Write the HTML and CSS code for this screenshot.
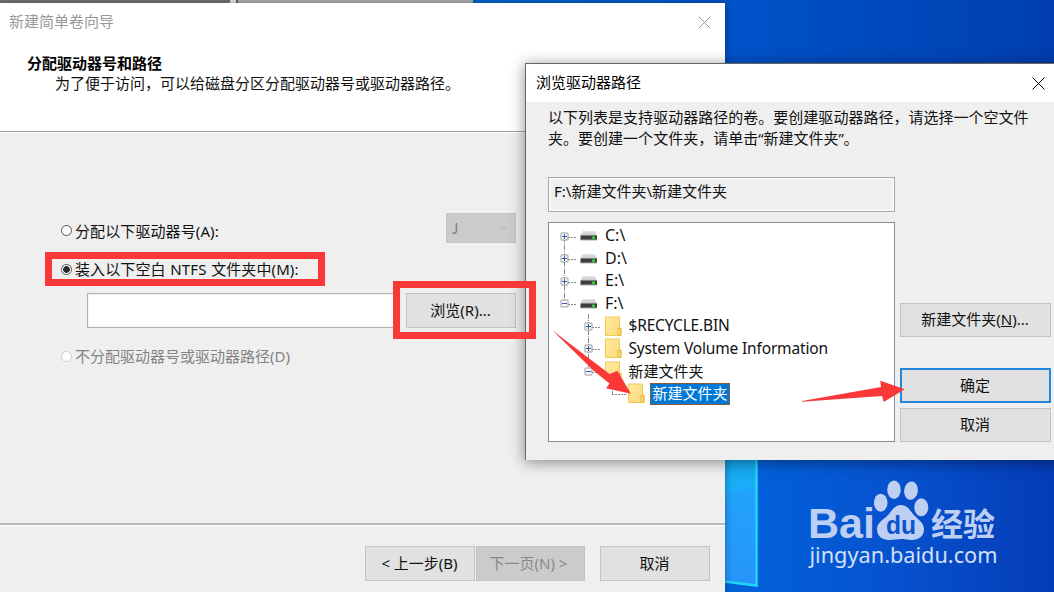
FILE: index.html
```html
<!DOCTYPE html>
<html lang="zh-CN">
<head>
  <meta charset="UTF-8" />
  <title>新建简单卷向导</title>
  <link rel="stylesheet" href="styles.css">
</head>
<body>

  <svg width="0" height="0" class="defs">
    <defs>
      <linearGradient id="driveTop" x1="0" y1="0" x2="0" y2="1">
        <stop offset="0" stop-color="#e3e5e8" />
        <stop offset="1" stop-color="#bfc3c8" />
      </linearGradient>
      <linearGradient id="folderFill" x1="0" y1="0" x2="1" y2="1">
        <stop offset="0" stop-color="#ffeaa0" />
        <stop offset="1" stop-color="#fcd978" />
      </linearGradient>
      <symbol id="drive" viewBox="0 0 18 12">
        <path d="M2.5 1h12.500l2 5H.5z" fill="url(#driveTop)" />
        <rect x=".5" y="5.500" width="16.500" height="4.500" fill="#3b3d3f" />
        <rect x=".5" y="9.500" width="16.500" height="1" fill="#a9adb1" />
        <rect x="12" y="6.500" width="3" height="2.500" fill="#25d52c" />
      </symbol>
      <symbol id="folder" viewBox="0 0 17 21">
        <path d="M.5 1h14v11h1.500v7.500H.5z" fill="url(#folderFill)" stroke="#efcb56" />
        <path d="M13 19.500v-7h3v7z" fill="#fbd976" stroke="#e6b93c" />
      </symbol>
      <symbol id="plus" viewBox="0 0 9 9">
        <rect x="1" y="1" width="7" height="7" rx=".5" fill="#f8f8f8" stroke="#9b9b9b" />
        <path d="M2 4.500h5M4.500 2v5" stroke="#3458ad" />
      </symbol>
      <symbol id="minus" viewBox="0 0 9 9">
        <rect x="1" y="1" width="7" height="7" rx=".5" fill="#f8f8f8" stroke="#9b9b9b" />
        <path d="M2 4.500h5" stroke="#3458ad" />
      </symbol>
    </defs>
  </svg>

  <div class="desktop">
    <svg class="wallpaper" viewBox="0 0 1054 592">
      <defs>
        <linearGradient id="sky" x1="0" y1="0" x2="1" y2="0">
          <stop offset="0" stop-color="#0074d4" />
          <stop offset=".45" stop-color="#0068cd" />
          <stop offset=".7" stop-color="#0052c8" />
          <stop offset="1" stop-color="#003eb0" />
        </linearGradient>
        <linearGradient id="low" x1="725" y1="0" x2="1054" y2="0" gradientUnits="userSpaceOnUse">
          <stop offset="0" stop-color="#0064dc" />
          <stop offset=".5" stop-color="#0752cf" />
          <stop offset="1" stop-color="#053cb7" />
        </linearGradient>
        <linearGradient id="pane" x1="0" y1="460" x2="0" y2="585" gradientUnits="userSpaceOnUse">
          <stop offset="0" stop-color="#189be8" />
          <stop offset=".25" stop-color="#22a3fb" />
          <stop offset="1" stop-color="#2794fb" />
        </linearGradient>
      </defs>
      <rect width="1054" height="460" fill="url(#sky)" />
      <rect x="725" y="440" width="329" height="152" fill="url(#low)" />
      <path d="M720 440H757V586L720 581z" fill="url(#pane)" />
      <path d="M725 494L756 488V460H725z" fill="#15b7f6" opacity=".45" />
      <path d="M756.500 440V585.500L720 581" fill="none" stroke="#24d4f6" stroke-width="2.500" />
    </svg>

    <div class="behind">
      <div class="behind-dark"></div>
      <div class="behind-light"></div>
    </div>

    <div class="window wizard">
      <div class="wizard-head">
        <div class="title-bar">
          <span>新建简单卷向导</span>
          <svg class="close" viewBox="0 0 13 13"><path d="M.5.5l12 12M12.500.5l-12 12" /></svg>
        </div>
        <h1>分配驱动器号和路径</h1>
        <p>为了便于访问，可以给磁盘分区分配驱动器号或驱动器路径。</p>
      </div>
      <div class="wizard-body">
        <div class="option">
          <span class="radio"></span>
          <label>分配以下驱动器号(A):</label>
          <div class="combo">
            <span>J</span>
            <svg viewBox="0 0 8 5"><path d="M1 .5l3 3 3-3" /></svg>
          </div>
        </div>
        <div class="option mount">
          <span class="radio checked"></span>
          <label>装入以下空白 NTFS 文件夹中(M):</label>
        </div>
        <div class="path-row">
          <div class="path-input"></div>
          <div class="button browse">浏览(R)...</div>
        </div>
        <div class="option none">
          <span class="radio"></span>
          <label>不分配驱动器号或驱动器路径(D)</label>
        </div>
      </div>
      <div class="wizard-foot">
        <div class="button">&lt; 上一步(B)</div>
        <div class="button disabled">下一页(N) &gt;</div>
        <div class="button cancel">取消</div>
      </div>
    </div>

    <div class="window dialog">
      <div class="title-bar">
        <span>浏览驱动器路径</span>
        <svg class="close" viewBox="0 0 13 13"><path d="M.5.5l12 12M12.500.5l-12 12" /></svg>
      </div>
      <div class="dialog-body">
        <p>以下列表是支持驱动器路径的卷。要创建驱动器路径，请选择一个空文件<br>夹。要创建一个文件夹，请单击<span class="quote">“</span>新建文件夹<span class="quote">”</span>。</p>
        <div class="current-path">F:\新建文件夹\新建文件夹</div>
        <div class="columns">
          <div class="tree">
            <svg class="tree-lines" viewBox="0 0 100 190">
              <path d="M16.500 14V81M40.500 91V149M64.500 160V171" stroke-dasharray="5 1 1 1" />
              <path d="M20 14.500h9M20 36.500h9M20 59.500h9M20 81.500h9M44 104.500h9M44 126.500h9M44 149.500h9M64 171.500h14" stroke-dasharray="2 1" />
            </svg>
            <div class="node"><svg class="toggle"><use href="#plus" /></svg><svg class="drive"><use href="#drive" /></svg><span class="letter">C:\</span></div>
            <div class="node"><svg class="toggle"><use href="#plus" /></svg><svg class="drive"><use href="#drive" /></svg><span class="letter">D:\</span></div>
            <div class="node"><svg class="toggle"><use href="#plus" /></svg><svg class="drive"><use href="#drive" /></svg><span class="letter">E:\</span></div>
            <div class="node"><svg class="toggle"><use href="#minus" /></svg><svg class="drive"><use href="#drive" /></svg><span class="letter">F:\</span></div>
            <div class="node child"><svg class="toggle"><use href="#plus" /></svg><svg class="folder"><use href="#folder" /></svg><span class="latin">$RECYCLE.BIN</span></div>
            <div class="node child"><svg class="toggle"><use href="#plus" /></svg><svg class="folder"><use href="#folder" /></svg><span class="latin">System Volume Information</span></div>
            <div class="node child"><svg class="toggle"><use href="#minus" /></svg><svg class="folder"><use href="#folder" /></svg><span>新建文件夹</span></div>
            <div class="node leaf"><svg class="folder"><use href="#folder" /></svg><span class="selected">新建文件夹</span></div>
          </div>
          <div class="actions">
            <div class="button">新建文件夹(<u>N</u>)...</div>
            <div class="button primary">确定</div>
            <div class="button">取消</div>
          </div>
        </div>
      </div>
    </div>

    <div class="mark mark-option"></div>
    <div class="mark mark-browse"></div>
    <svg class="overlay" viewBox="0 0 1054 592">
      <g fill="#fb3838">
        <path d="M552 330L609.500 374 617.500 371 631 393.700 606 388.300 609.500 383.500 594 371z" />
        <path d="M802 401L881 387 880.300 380.700 904.700 389.300 883.700 402 882 396 802 401.800z" />
      </g>
      <g class="logo" fill="#bdd0f3">
        <text class="logo-bai" x="808" y="538" textLength="67" lengthAdjust="spacingAndGlyphs">Bai</text>
        <ellipse cx="880.700" cy="502.700" rx="6.800" ry="9" />
        <ellipse cx="894" cy="489.700" rx="6.800" ry="9.200" />
        <ellipse cx="911" cy="490.700" rx="6.900" ry="9.200" transform="rotate(8 911 490.700)" />
        <ellipse cx="921.300" cy="507.300" rx="7" ry="9" />
        <path d="M901 505c6 0 9 5 12 9s11 8 11 15c0 7-5 11-12 11-5 0-7-1-11-1s-7 1-12 1c-7 0-12-4-12-11s8-10 12-15 6-9 12-9z" />
        <text class="logo-du" x="886" y="533.700" textLength="30" lengthAdjust="spacingAndGlyphs">du</text>
        <text class="logo-cn" x="931" y="535.500" textLength="64" lengthAdjust="spacingAndGlyphs">经验</text>
        <text class="logo-url" x="809.500" y="563.300" textLength="188" lengthAdjust="spacingAndGlyphs">jingyan.baidu.com</text>
      </g>
    </svg>
  </div>

</body>
</html>
```

FILE: styles.css
```css
* {
  box-sizing: border-box;
}

html, body {
  margin: 0;
  padding: 0;
  height: 100%;
  overflow: hidden;
  font-family: "Noto Sans", "Noto Sans CJK SC", sans-serif;
  font-size: 15px;
  color: #111;
}

.defs {
  position: absolute;
}

.desktop {
  position: relative;
  width: 1054px;
  height: 592px;
  overflow: hidden;
}

.wallpaper, .overlay {
  position: absolute;
  left: 0;
  top: 0;
  width: 1054px;
  height: 592px;
}

/* sliver of the window behind */
.behind {
  position: absolute;
  left: 0;
  top: 0;
  width: 473px;
  height: 4px;
  display: flex;
  gap: 6px;
  background: #e4e4e4;
}

.behind-dark { width: 230px; background: #747474; }
.behind-light { flex: 1; background: #b0b0b0; border-left: 2px solid #666; }

.window {
  position: absolute;
  display: flex;
  flex-direction: column;
  background: #efefef;
}

.wizard {
  left: 0;
  top: 3px;
  width: 725px;
  height: 589px;
  box-shadow: 0 0 8px rgba(0, 0, 0, 0.35);
}

.title-bar {
  display: flex;
  justify-content: space-between;
  align-items: center;
  height: 38px;
  background: white;
  color: #000;
}

.title-bar span {
  padding-bottom: 4px;
}

.close {
  width: 13px;
  height: 13px;
  fill: none;
  stroke: currentColor;
}

.wizard .title-bar {
  padding: 0 14px 0 9px;
  color: #999;
}

.wizard-head {
  height: 129px;
  background: white;
  border-bottom: 1px solid #a0a0a0;
}

.wizard-head h1 {
  margin: 12px 0 0 27px;
  font-size: 15px;
  line-height: 20px;
  color: #000;
}

.wizard-head p {
  margin: 0 0 0 55px;
  line-height: 20px;
}

.wizard-body {
  flex: 1;
  padding: 80px 0 0 61px;
  border-top: 1px solid #fff;
}

.option {
  display: flex;
  align-items: center;
  gap: 3px;
  height: 30px;
}

.option:first-child .radio { margin-top: 4px; }
.option:first-child label { padding-top: 4px; }
.mount { margin-top: 11px; }
.none { margin-top: 13px; color: #838383; }

.radio {
  width: 11px;
  height: 11px;
  border: 1px solid #555;
  border-radius: 50%;
  background: white;
}

.radio.checked {
  background: radial-gradient(circle, #2b2b2b 0 3px, white 3.7px);
}

.none .radio { border-color: #ccc; }

.option label { letter-spacing: 0.1px; }
.mount label { word-spacing: 0.7px; padding-bottom: 1px; }
.none label { letter-spacing: 0; padding-bottom: 1px; }

.combo {
  display: flex;
  align-items: center;
  justify-content: space-between;
  width: 70px;
  height: 30px;
  margin-left: auto;
  margin-right: 209px;
  padding: 0 7px 0 5px;
  background: #cbcbcb;
  border: 1px solid #c4c4c4;
  color: #838383;
}

.combo span { font-family: Lato, sans-serif; }

.combo svg {
  width: 8px;
  height: 5px;
  fill: none;
  stroke: #aaa;
}

.path-row {
  display: flex;
  align-items: center;
  gap: 6px;
  margin: 9px 0 0 26px;
}

.path-input {
  width: 313px;
  height: 35px;
  background: white;
  border: 1px solid #b0b0b0;
  box-shadow: inset 0 0 0 1px #f3f3f3;
}

.button {
  display: flex;
  align-items: center;
  justify-content: center;
  width: 110px;
  height: 35px;
  padding: 0 1px 3px 0;
  background: #e1e1e1;
  border: 1px solid #c3c3c3;
  white-space: pre;
}

.wizard-foot {
  display: flex;
  height: 69px;
  padding: 21px 0 0 365px;
  border-top: 2px solid #b9b9b9;
  box-shadow: inset 0 1px #fff;
}

.button.disabled {
  width: 109px;
  margin-left: 1px;
  padding-right: 4px;
  background: #cbcbcb;
  color: #888;
}

.button.cancel { margin-left: 15px; }

.dialog {
  left: 525px;
  top: 63px;
  width: 540px;
  height: 397px;
  border: 1px solid #666;
  border-bottom: 0;
  box-shadow: 0 2px 14px rgba(0, 0, 0, 0.45);
}

.dialog .title-bar {
  padding: 0 19px 0 10px;
}

.dialog-body {
  padding: 5px 0 0 22px;
}

.dialog-body p {
  margin: 0;
  line-height: 20.5px;
  letter-spacing: 0.02px;
  white-space: nowrap;
}

.quote {
  font-family: "Noto Sans", sans-serif;
  letter-spacing: -0.3px;
}

.current-path {
  width: 347px;
  height: 35px;
  margin-top: 29px;
  padding: 0 5px;
  line-height: 27px;
  border: 1px solid #aaa;
  box-shadow: inset 0 0 0 2px #f8f8f8;
}

.columns {
  display: flex;
  gap: 5px;
  margin-top: 10px;
}

.tree {
  position: relative;
  width: 347px;
  height: 220px;
  padding-top: 2px;
  background: white;
  border: 1px solid #858b93;
}

.tree-lines {
  position: absolute;
  left: -1px;
  top: 0;
  width: 100px;
  height: 190px;
  fill: none;
  stroke: #8a8a8a;
}

.node {
  position: relative;
  display: flex;
  align-items: center;
  height: 22.5px;
  padding-left: 11px;
}

.node span { margin-top: -2px; }
.node.child { padding-left: 35px; }
.node.leaf { padding-left: 79px; }

.toggle {
  width: 9px;
  height: 9px;
  margin-right: 11px;
}

.child .toggle { margin-right: 12px; }

.drive {
  width: 18px;
  height: 12px;
  margin-right: 7px;
}

.folder {
  width: 17px;
  height: 21px;
  margin-right: 6.500px;
}

.letter { font-size: 16px; }

.latin {
  font-size: 15.500px;
  letter-spacing: -0.17px;
}

.leaf .folder { margin-right: 5px; }

.node .selected {
  height: 22px;
  margin-top: 0;
  padding: 0 1.500px;
  line-height: 19px;
  background: #0078d7;
  border: 1px solid #8a5a34;
  color: white;
}

.actions {
  display: flex;
  flex-direction: column;
  padding-top: 81px;
}

.actions .button {
  width: 151px;
  height: 34px;
  flex: none;
}

.actions .primary {
  margin: 31px 0 5px;
  height: 35px;
  border: 2px solid #2388dc;
}

/* red highlights */
.mark {
  position: absolute;
  border: 7px solid #fb3838;
}

.mark-option {
  left: 45px;
  top: 252px;
  width: 280px;
  height: 34px;
}

.mark-browse {
  left: 393px;
  top: 281px;
  width: 143px;
  height: 58px;
}

.logo-bai {
  font: bold 42px "Liberation Sans", sans-serif;
}

.logo-du {
  font: bold 25px "Liberation Sans", sans-serif;
  fill: #0a55cf;
}

.logo-cn {
  font: bold 32px "Noto Sans CJK SC", sans-serif;
}

.logo-url {
  font: 22px "Noto Sans", sans-serif;
  fill: #d3e0f8;
}
```
